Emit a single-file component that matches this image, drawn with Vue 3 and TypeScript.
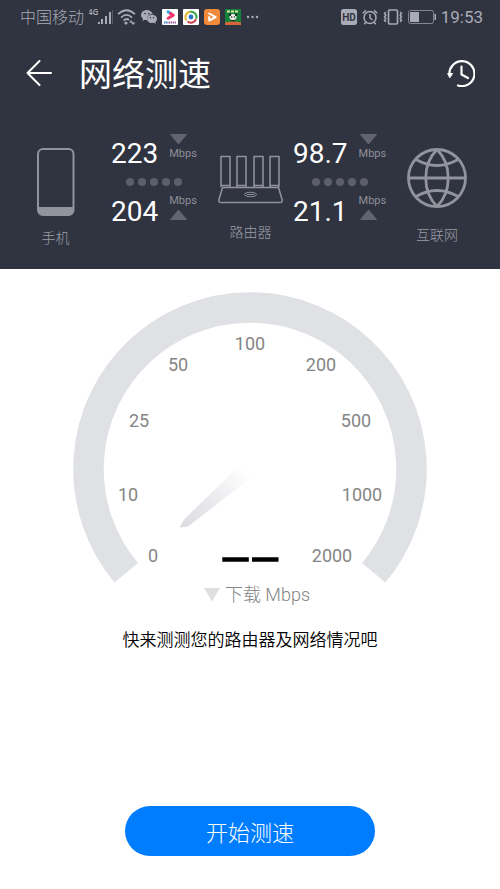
<script setup lang="ts">
interface Tick {
  label: string
  x: number
  y: number
}

interface Link {
  name: string
  down: string
  up: string
}

const phoneLink: Link = { name: '手机 - 路由器', down: '223', up: '204' }
const wanLink: Link = { name: '路由器 - 互联网', down: '98.7', up: '21.1' }

const ticks: Tick[] = [
  { label: '0', x: 153, y: 293 },
  { label: '10', x: 128, y: 232 },
  { label: '25', x: 139, y: 158 },
  { label: '50', x: 178, y: 102 },
  { label: '100', x: 250, y: 81 },
  { label: '200', x: 321, y: 102 },
  { label: '500', x: 356, y: 158 },
  { label: '1000', x: 362, y: 232 },
  { label: '2000', x: 332, y: 293 },
]

const antennas: number[] = [3, 19, 36, 52]
</script>

<template>
  <main class="page">
    <header class="top">
      <div class="status">
        <span class="carrier">中国移动</span>
        <svg class="signal" width="26" height="20" viewBox="0 0 26 20">
          <text x="-1" y="8" class="net">4G</text>
          <g fill="#a9abb6">
            <rect x="9" y="15" width="2" height="2" />
            <rect x="12" y="12" width="2" height="5" />
            <rect x="16" y="9" width="2" height="8" />
            <rect x="20" y="5" width="2" height="12" />
          </g>
          <rect x="23" y="3" width="1" height="14" fill="#575a67" />
        </svg>
        <svg class="wifi" width="19" height="18" viewBox="0 0 19 18">
          <g fill="none" stroke="#a9abb6" stroke-width="1.800">
            <path d="M1 6.200Q9.500-1.800 18 6.200" />
            <path d="M4 9.600Q9.500 4.200 15 9.600" />
            <path d="M6.600 12.600Q9.500 9.800 12 12" />
          </g>
          <circle cx="9" cy="15" r="1.600" fill="#a9abb6" />
          <path d="M12 14.500 14 12l2 2.500zM14 14.500 16.200 17l2.200-2.500z" fill="#a9abb6" />
        </svg>
        <svg width="16" height="16" viewBox="0 0 16 16">
          <path d="M6 1C2.700 1 0 3.200 0 6c0 1.600.800 2.900 2.100 3.800L1.600 12l2.300-1.300c.7.200 1.500.3 2.300.3C5.500 7.700 8 5 11.700 5 11 2.700 8.700 1 6 1z" fill="#a9abb6" />
          <path d="M11 5.800c-2.800 0-4.900 1.800-4.900 4.100s2.100 4.200 4.900 4.200c.7 0 1.300-.1 1.900-.3l1.900 1.100-.5-1.800c1-.8 1.700-1.900 1.700-3.200 0-2.300-2.200-4.100-5-4.100z" fill="#a9abb6" />
          <g fill="#303340"><circle cx="4" cy="4.600" r=".8" /><circle cx="7.800" cy="4.600" r=".8" /><circle cx="9.400" cy="8.800" r=".7" /><circle cx="12.600" cy="8.800" r=".7" /></g>
        </svg>
        <svg width="16" height="16" viewBox="0 0 16 16">
          <rect width="16" height="16" rx="1" fill="#fff" />
          <path d="M6 2.800 9 4.500" stroke="#29a8e8" stroke-width="3" stroke-linecap="round" />
          <path d="M6.200 9.300 11.300 6.300 8.500 4.600" fill="none" stroke="#f0356b" stroke-width="3" stroke-linecap="round" stroke-linejoin="round" />
          <path d="M2 13.500h4" stroke="#3c7fc0" stroke-width="2" stroke-dasharray="1.500 .6" />
          <path d="M6.500 13.500H14" stroke="#a25d9a" stroke-width="2" stroke-dasharray="1.500 .6" />
        </svg>
        <svg width="16" height="16" viewBox="0 0 16 16">
          <rect width="16" height="16" rx="1" fill="#fff" />
          <g fill="none" stroke-width="2">
            <path d="M3.600 11.500A5.400 5.400 0 0 1 7 2.800" stroke="#e5b92d" />
            <path d="M7 2.800a5.400 5.400 0 0 1 6.200 7" stroke="#3fa84c" />
            <path d="M13 10.200A5.400 5.400 0 0 1 4.500 12.500" stroke="#c93e4a" />
          </g>
          <circle cx="8" cy="8" r="2.400" fill="#2874c8" />
        </svg>
        <svg width="16" height="16" viewBox="0 0 16 16">
          <rect width="16" height="16" rx="3" fill="#f28a3c" />
          <path d="M5.200 8v3.500l6.500-3.300-6.500-3.700" fill="none" stroke="#fff" stroke-width="2" stroke-linejoin="round" stroke-linecap="round" />
        </svg>
        <svg width="16" height="16" viewBox="0 0 16 16">
          <rect width="16" height="16" fill="#17813c" />
          <path d="M2 2.500h12" stroke="#d8e4a0" stroke-width="2" stroke-dasharray="3 1" />
          <ellipse cx="8" cy="8" rx="3.500" ry="3" fill="#f2f3ed" />
          <circle cx="5" cy="5.800" r="1.200" fill="#152c1d" /><circle cx="11" cy="5.800" r="1.200" fill="#152c1d" />
          <circle cx="6.700" cy="8" r=".8" fill="#152c1d" /><circle cx="9.400" cy="8" r=".8" fill="#152c1d" />
          <path d="M5 12.500c1-2 5-2 6 0" fill="#1c2c20" />
          <path d="M0 13.500q8-2 16 0V16H0z" fill="#d8663d" />
        </svg>
        <svg width="14" height="16" viewBox="0 0 14 16" fill="#a9abb6">
          <circle cx="2" cy="8" r="1.200" /><circle cx="6.500" cy="8" r="1.200" /><circle cx="11" cy="8" r="1.200" />
        </svg>

        <div class="status-right">
          <svg width="16" height="16" viewBox="0 0 16 16">
            <rect width="16" height="16" rx="2.500" fill="#a9abb6" />
            <text x="8" y="12" text-anchor="middle" class="hd">HD</text>
          </svg>
          <svg width="16" height="16" viewBox="0 0 16 16" fill="none" stroke="#a9abb6" stroke-width="1.500">
            <circle cx="8" cy="8.500" r="6" />
            <path d="M8 5v4l2.500 2M.8 4.200 4 1.200M12 1.200l3.200 3M3.800 13.200l-1.500 2M12.200 13.200l1.500 2" />
          </svg>
          <svg width="20" height="16" viewBox="0 0 20 16" fill="none" stroke="#a9abb6">
            <rect x="5.500" y="1" width="9" height="14" rx="1" stroke-width="1.600" />
            <path d="m2.800 3-1.300 1.500L2.800 6.200 1.500 8l1.300 1.600-1.300 1.700L2.800 13M17.200 3l1.300 1.500-1.300 1.700L18.500 8l-1.300 1.600 1.300 1.700-1.300 1.700" stroke-width="1.500" />
          </svg>
          <svg class="battery" width="28" height="14" viewBox="0 0 28 14">
            <rect x=".5" y=".5" width="25" height="13" rx="2" fill="none" stroke="#858792" />
            <rect x="2" y="2" width="9" height="10" fill="#a9abb6" />
            <rect x="26.500" y="4" width="1.500" height="6" fill="#a9abb6" />
          </svg>
          <time class="clock">19:53</time>
        </div>
      </div>

      <div class="bar">
        <button class="icon-btn" type="button" aria-label="返回">
          <svg width="26" height="26" viewBox="0 0 26 26" fill="none" stroke="#fff" stroke-width="2" stroke-linecap="round" stroke-linejoin="round">
            <path d="M25 13H1.500M13.500 1 1.500 13l12 12" />
          </svg>
        </button>
        <h1>网络测速</h1>
        <button class="icon-btn" type="button" aria-label="历史记录">
          <svg width="28" height="28" viewBox="0 0 28 28" fill="none" stroke="#fff" stroke-width="2.200" stroke-linecap="round" stroke-linejoin="round">
            <path d="M2.500 16A12.500 12.500 0 1 1 11 26.500" />
            <path d="M1 14.500h4.500L3 18.500z" fill="#fff" stroke-width="1" />
            <path d="M14.500 7.500v8l6.500 3.500" />
          </svg>
        </button>
      </div>

      <section class="topology">
        <div class="node phone">
          <svg width="38" height="68" viewBox="0 0 38 68">
            <rect x="1" y="1" width="35.500" height="66" rx="5" fill="none" stroke="#92949d" stroke-width="2" />
            <path d="M1 59h35.500v3a5 5 0 0 1-5 5H6a5 5 0 0 1-5-5z" fill="#92949d" />
          </svg>
          <span>手机</span>
        </div>

        <div class="link" :aria-label="phoneLink.name">
          <strong>{{ phoneLink.down }}</strong>
          <div class="unit">
            <svg width="20" height="11" viewBox="0 0 20 11"><path d="M1.500 .5h16L9.500 10z" fill="#62656f" stroke="#62656f" stroke-linejoin="round" /></svg>
            <span>Mbps</span>
          </div>
          <div class="dots"><i v-for="n in 5" :key="n"></i></div>
          <strong>{{ phoneLink.up }}</strong>
          <div class="unit">
            <span>Mbps</span>
            <svg width="20" height="11" viewBox="0 0 20 11"><path d="M1.500 10.500h16L9.500 1z" fill="#62656f" stroke="#62656f" stroke-linejoin="round" /></svg>
          </div>
        </div>

        <div class="node router">
          <svg width="65" height="49" viewBox="0 0 65 49" fill="none" stroke="#92949d" stroke-width="1.500" stroke-linejoin="round">
            <path v-for="x in antennas" :key="x" :d="`M${x} 32V1.500h9V32M${x} 30.500h9`" />
            <path d="M4.500 32.500h56l3.700 12.500q.2 2.500-2 2.500H2.800q-2.200 0-2-2.500z" />
            <ellipse cx="32.500" cy="39.500" rx="6" ry="2.200" stroke-width="1" />
            <path d="M29 39.500h7" stroke-width="1" />
          </svg>
          <span>路由器</span>
        </div>

        <div class="link" :aria-label="wanLink.name">
          <strong>{{ wanLink.down }}</strong>
          <div class="unit">
            <svg width="20" height="11" viewBox="0 0 20 11"><path d="M1.500 .5h16L9.500 10z" fill="#62656f" stroke="#62656f" stroke-linejoin="round" /></svg>
            <span>Mbps</span>
          </div>
          <div class="dots"><i v-for="n in 5" :key="n"></i></div>
          <strong>{{ wanLink.up }}</strong>
          <div class="unit">
            <span>Mbps</span>
            <svg width="20" height="11" viewBox="0 0 20 11"><path d="M1.500 10.500h16L9.500 1z" fill="#62656f" stroke="#62656f" stroke-linejoin="round" /></svg>
          </div>
        </div>

        <div class="node globe">
          <svg width="60" height="60" viewBox="0 0 60 60" fill="none" stroke="#92949d" stroke-width="2.800">
            <circle cx="30" cy="30" r="28.500" />
            <path d="M1 30h58M30 1.500c-15 15-15 42 0 57M30 1.500c15 15 15 42 0 57M9 11.500q21 12 42 0M9 48.500q21-12 42 0" />
          </svg>
          <span>互联网</span>
        </div>
      </section>
    </header>

    <section class="meter">
      <svg class="gauge" viewBox="0 0 500 314" role="img" aria-label="网速仪表盘">
        <defs>
          <linearGradient id="needle" gradientUnits="userSpaceOnUse" x1="182" y1="257" x2="247" y2="202">
            <stop offset="0" stop-color="#dcdce2" />
            <stop offset="0.400" stop-color="#e8e8ec" />
            <stop offset="1" stop-color="#fff" />
          </linearGradient>
        </defs>
        <path d="M126.300 303.800A161.500 161.500 0 1 1 373.700 303.800" fill="none" stroke="#e0e1e5" stroke-width="30.500" />
        <path d="M179.500 258.500 184 250.500 239 197 252 208 188 257.500z" fill="url(#needle)" />
        <text v-for="t in ticks" :key="t.label" class="tick" :x="t.x" :y="t.y" text-anchor="middle">{{ t.label }}</text>
        <path d="M222.300 290.500h26.500M252 290.500h26.500" stroke="#000" stroke-width="4.500" />
      </svg>
      <p class="mode">
        <svg width="16" height="14" viewBox="0 0 16 14"><path d="M0 0h16L8 13.500z" fill="#dfdfe1" /></svg>
        <span>下载 Mbps</span>
      </p>
      <p class="hint">快来测测您的路由器及网络情况吧</p>
    </section>

    <button class="start" type="button">开始测速</button>
  </main>
</template>

<style>
body {
  margin: 0;
  background: #fff;
}
</style>

<style scoped>
.page {
  display: flex;
  flex-direction: column;
  align-items: center;
  min-height: 100vh;
  box-sizing: border-box;
  padding-bottom: 33px;
  font-family: Roboto, "Noto Sans CJK SC", sans-serif;
  background: #fff;
}

svg {
  display: block;
  flex: none;
}

.top {
  width: 100%;
  background: #303340;
  color: #fff;
}

.status {
  display: flex;
  align-items: center;
  gap: 5px;
  height: 34px;
  padding: 0 17px 0 20px;
  color: #a9abb6;
  font-size: 17px;
  line-height: 34px;
}

.carrier {
  padding-top: 2px;
  font-size: 16px;
  font-weight: 300;
  white-space: nowrap;
}

.signal {
  margin-right: -3px;
}

.net {
  font-family: "Open Sans", sans-serif;
  font-size: 8px;
  font-weight: 600;
  fill: #a9abb6;
}

.hd {
  font-size: 10px;
  font-weight: 700;
  fill: #303340;
}

.status-right {
  display: flex;
  align-items: center;
  gap: 5px;
  margin-left: auto;
}

.bar {
  display: flex;
  align-items: center;
  height: 78px;
  padding: 0 25px 0 26px;
}

.icon-btn {
  padding: 0;
  border: 0;
  background: none;
  cursor: pointer;
}

h1 {
  flex: 1;
  margin: 0 0 0 27px;
  padding-top: 4px;
  font-size: 33px;
  font-weight: 400;
  line-height: 48px;
}

.topology {
  display: grid;
  grid-template-columns: 111fr 107fr 75fr 114fr 93fr;
  height: 142px;
  margin-top: 15px;
}

.node {
  display: flex;
  flex-direction: column;
  align-items: center;
  align-self: center;
  justify-self: start;
  color: #9a9ca5;
  font-size: 14px;
  font-weight: 300;
  line-height: 20px;
}

.phone {
  justify-self: center;
  gap: 12px;
}

.router {
  gap: 18px;
}

.globe {
  gap: 17px;
  padding-bottom: 4px;
}

.link {
  display: grid;
  grid-template-columns: auto auto;
  grid-template-rows: 38px 20px 38px;
  column-gap: 11px;
  align-self: start;
  justify-self: start;
  padding-top: 7px;
}

.link strong {
  font-size: 28px;
  font-weight: 400;
  line-height: 40px;
}

.unit {
  display: flex;
  flex-direction: column;
  align-items: flex-start;
  color: #8e909a;
  font-size: 11px;
  line-height: 17px;
}

.dots {
  display: flex;
  grid-column: 1 / -1;
  align-items: center;
  justify-content: center;
  gap: 4px;
}

.dots i {
  width: 8px;
  height: 8px;
  border-radius: 50%;
  background: #5d606b;
}

.meter {
  display: flex;
  flex-direction: column;
  align-items: center;
  width: 100%;
}

.gauge {
  width: 100%;
  max-width: 600px;
}

.tick {
  font-size: 18px;
  fill: #858585;
}

.mode {
  display: flex;
  align-items: center;
  gap: 5px;
  margin: 0;
  padding-left: 14px;
  color: #858585;
  font-size: 18px;
  font-weight: 300;
  line-height: 24px;
}

.hint {
  margin: 20px 0;
  color: #000;
  font-size: 17px;
  font-weight: 350;
  line-height: 26px;
}

.start {
  width: 50%;
  height: 50px;
  margin-top: auto;
  border: 0;
  border-radius: 25px;
  background: #007dff;
  color: #fff;
  font-family: inherit;
  font-size: 22px;
  font-weight: 300;
  cursor: pointer;
}
</style>
